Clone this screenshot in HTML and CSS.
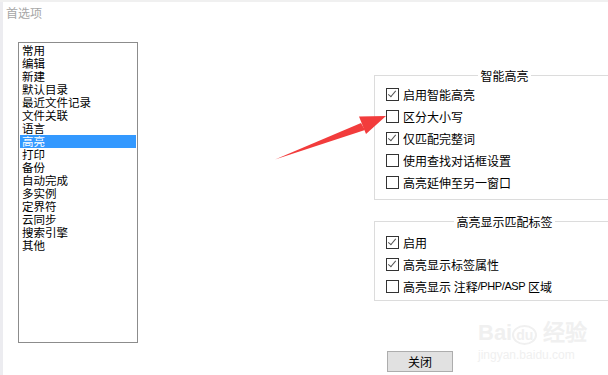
FILE: index.html
```html
<!DOCTYPE html>
<html lang="zh-CN">
<head>
    <meta charset="UTF-8">
    <title>首选项</title>
    <link rel="stylesheet" href="styles.css">
</head>
<body>
    <div class="edge"></div>
    <div class="title">首选项</div>

    <div class="main">
        <ul class="listbox">
            <li>常用</li>
            <li>编辑</li>
            <li>新建</li>
            <li>默认目录</li>
            <li>最近文件记录</li>
            <li>文件关联</li>
            <li>语言</li>
            <li class="selected">高亮</li>
            <li>打印</li>
            <li>备份</li>
            <li>自动完成</li>
            <li>多实例</li>
            <li>定界符</li>
            <li>云同步</li>
            <li>搜索引擎</li>
            <li>其他</li>
        </ul>

        <div class="panel">
            <fieldset class="group">
                <legend>智能高亮</legend>
                <div class="row"><span class="box checked"></span>启用智能高亮</div>
                <div class="row"><span class="box"></span>区分大小写</div>
                <div class="row"><span class="box checked"></span>仅匹配完整词</div>
                <div class="row"><span class="box"></span>使用查找对话框设置</div>
                <div class="row"><span class="box"></span>高亮延伸至另一窗口</div>
            </fieldset>

            <fieldset class="group second">
                <legend>高亮显示匹配标签</legend>
                <div class="row"><span class="box checked"></span>启用</div>
                <div class="row"><span class="box checked"></span>高亮显示标签属性</div>
                <div class="row"><span class="box"></span>高亮显示 注释<span class="narrow">/PHP/ASP</span>&nbsp;区域</div>
            </fieldset>

            <button class="close-btn">关闭</button>
        </div>
    </div>

    <!-- red annotation arrow -->
    <svg class="arrow" width="608" height="375" viewBox="0 0 608 375">
        <polygon points="275,157.5 361,121 365,128" fill="#f23c3c"/>
        <polygon points="386,114 359,114.5 366,132" fill="#f23c3c"/>
    </svg>

    <div class="watermark">
        <div class="wm-logo">Bai<span class="wm-du">du</span> 经验</div>
        <div class="wm-url">jingyan.baidu.com</div>
    </div>
</body>
</html>
```

FILE: styles.css
```css
body {
    margin: 0;
    width: 608px;
    height: 375px;
    overflow: hidden;
    position: relative;
    background: #fff;
    color: #000;
    font-family: "Noto Sans CJK SC", "Noto Sans", sans-serif;
    font-size: 12px;
    border-top: 2px solid #f0f0f0;
    box-sizing: border-box;
}
.edge {
    position: absolute;
    left: 0;
    top: 0;
    width: 3px;
    height: 375px;
    background: #ececf0;
}
.title {
    padding: 3px 0 0 6px;
    height: 16px;
    font-size: 12px;
    line-height: 16px;
    color: #a6a6a6;
}
.main {
    display: flex;
    align-items: flex-start;
    margin-top: 21px;
    padding-left: 18px;
}
.listbox {
    flex: none;
    list-style: none;
    margin: 0;
    padding: 1px;
    width: 116px;
    height: 297px;
    border: 1px solid #8c8c8c;
}
.listbox li {
    height: 13px;
    line-height: 13px;
    font-size: 11.5px;
    padding-left: 2px;
    white-space: nowrap;
}
.listbox li.selected {
    background: #3399ff;
    color: #fff;
}
.panel {
    flex: none;
    margin-left: 236px;
    width: 250px;
}
.group {
    margin: 26px 0 0 0;
    padding: 0 0 6px 11px;
    border: 1px solid #dcdcdc;
    min-width: 0;
}
.group legend {
    margin: 0 auto;
    padding: 0 2px;
    line-height: 15px;
    font-size: 12px;
}
.group.second {
    margin-top: 14px;
    padding-top: 2px;
    padding-bottom: 3px;
}
.row {
    display: flex;
    align-items: center;
    height: 22px;
    white-space: nowrap;
}
.box {
    width: 11px;
    height: 11px;
    border: 1px solid #333;
    background: #fff;
    margin-right: 4px;
    position: relative;
    flex: none;
}
.box.checked::after {
    content: "";
    position: absolute;
    left: 3px;
    top: 0px;
    width: 3px;
    height: 7px;
    border-right: 1.2px solid #555;
    border-bottom: 1.2px solid #555;
    transform: rotate(40deg);
}
.narrow {
    font-family: "Liberation Sans", sans-serif;
    font-size: 11px;
    letter-spacing: -0.4px;
}
.close-btn {
    display: block;
    margin: 50px 0 0 13px;
    width: 66px;
    height: 21px;
    padding: 0;
    background: #e1e1e1;
    border: 1px solid #adadad;
    font-family: "Noto Sans CJK SC", sans-serif;
    font-size: 12px;
    color: #000;
}
.arrow {
    position: absolute;
    left: 0;
    top: 0;
}
.watermark {
    position: absolute;
    left: 478px;
    top: 318px;
    color: #f0f0f0;
    font-family: "Liberation Sans", sans-serif;
}
.wm-logo {
    font-size: 22px;
    line-height: 26px;
    font-weight: bold;
}
.wm-du {
    font-size: 14px;
    border: 2px solid #f0f0f0;
    border-radius: 50%;
    padding: 0 2px;
}
.wm-url {
    font-size: 12px;
    line-height: 14px;
}
```
